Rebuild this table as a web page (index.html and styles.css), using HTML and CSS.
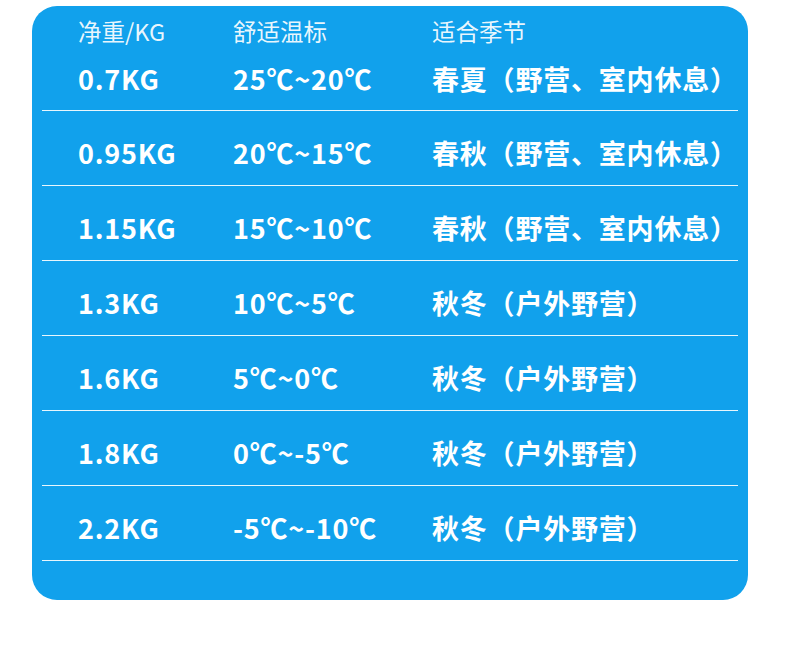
FILE: index.html
```html
<!DOCTYPE html>
<html lang="zh-CN">
<head>
<meta charset="utf-8">
<title>睡袋规格</title>
<link rel="stylesheet" href="styles.css">
</head>
<body>
<div class="card">
  <div class="row head">
    <span>净重/KG</span><span>舒适温标</span><span>适合季节</span>
  </div>
  <div class="row data first">
    <span>0.7KG</span><span>25℃~20℃</span><span>春夏（野营、室内休息）</span>
  </div>
  <div class="row data">
    <span>0.95KG</span><span>20℃~15℃</span><span>春秋（野营、室内休息）</span>
  </div>
  <div class="row data">
    <span>1.15KG</span><span>15℃~10℃</span><span>春秋（野营、室内休息）</span>
  </div>
  <div class="row data">
    <span>1.3KG</span><span>10℃~5℃</span><span>秋冬（户外野营）</span>
  </div>
  <div class="row data">
    <span>1.6KG</span><span>5℃~0℃</span><span>秋冬（户外野营）</span>
  </div>
  <div class="row data">
    <span>1.8KG</span><span>0℃~-5℃</span><span>秋冬（户外野营）</span>
  </div>
  <div class="row data">
    <span>2.2KG</span><span>-5℃~-10℃</span><span>秋冬（户外野营）</span>
  </div>
</div>
</body>
</html>
```
FILE: styles.css
```css
html, body {
  margin: 0;
  padding: 0;
  background: #ffffff;
}

body {
  font-family: "Noto Sans CJK SC", "Noto Sans", sans-serif;
  color: #ffffff;
}

.card {
  width: 716px;
  margin: 6px 0 0 32px;
  padding: 10px 10px 39px;
  box-sizing: border-box;
  background: #11a1ec;
  border-radius: 25px;
  display: flex;
  flex-direction: column;
}

.row {
  display: grid;
  grid-template-columns: 155px 199px 1fr;
  padding-left: 36px;
  line-height: 30px;
  white-space: nowrap;
}

.head {
  font-size: 23.5px;
  font-weight: 400;
  color: rgba(255, 255, 255, 0.92);
}

.data {
  font-size: 27px;
  font-weight: 700;
  letter-spacing: 0.8px;
  padding-top: 27px;
  padding-bottom: 17px;
  border-bottom: 1px solid rgba(255, 255, 255, 0.9);
}

.data.first {
  padding-top: 18px;
  padding-bottom: 16px;
}
```
